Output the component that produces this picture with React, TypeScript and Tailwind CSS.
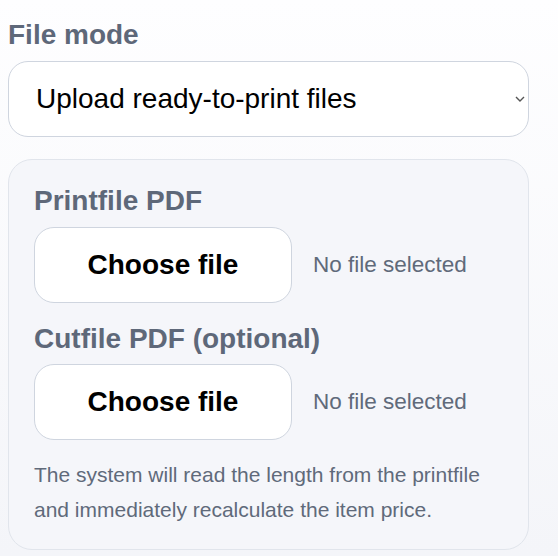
import React from "react";

function FileRow({ top }: { top: string }) {
  return (
    <div className={`${top} flex items-center`}>
      <div className="flex h-[76px] w-[258px] items-center justify-center rounded-[20px] border border-[#cfd5df] bg-white text-[28px] font-bold text-black">
        Choose file
      </div>
      <span className="ml-[21px] text-[22.5px] text-[#606a7a]">No file selected</span>
    </div>
  );
}

export default function App() {
  return (
    <div
      className="min-h-[556px] w-[558px] bg-gradient-to-b from-[#fefeff] to-[#f4f5f9] pl-2 pr-[29px] pt-[19px]"
      style={{ fontFamily: '"Liberation Sans", Arial, sans-serif' }}
    >
      <div className="text-[28px] font-bold leading-[32px] text-[#5e6879]">File mode</div>
      <div className="mt-[10px] flex h-[76px] items-center justify-between rounded-[20px] border border-[#cfd5df] bg-white pl-[27px] pr-[3px]">
        <span className="text-[28px] text-black">Upload ready-to-print files</span>
        <svg width="10" height="6" viewBox="0 0 10 6">
          <path d="M1 1l4 4 4-4" fill="none" stroke="#555" strokeWidth="1.4" />
        </svg>
      </div>
      <div className="mt-[22px] rounded-[24px] border border-[#e1e5ec] bg-[#f5f6fa] pb-[22px] pl-[25px] pr-[25px] pt-[25px]">
        <div className="text-[28px] font-bold leading-[32px] text-[#5e6879]">Printfile PDF</div>
        <FileRow top="mt-[10px]" />
        <div className="mt-[20px] text-[28px] font-bold leading-[32px] text-[#5e6879]">Cutfile PDF (optional)</div>
        <FileRow top="mt-[9px]" />
        <p className="mt-[17px] text-[21px] leading-[35px] text-[#606a7a]">
          The system will read the length from the printfile and immediately recalculate the item price.
        </p>
      </div>
    </div>
  );
}
